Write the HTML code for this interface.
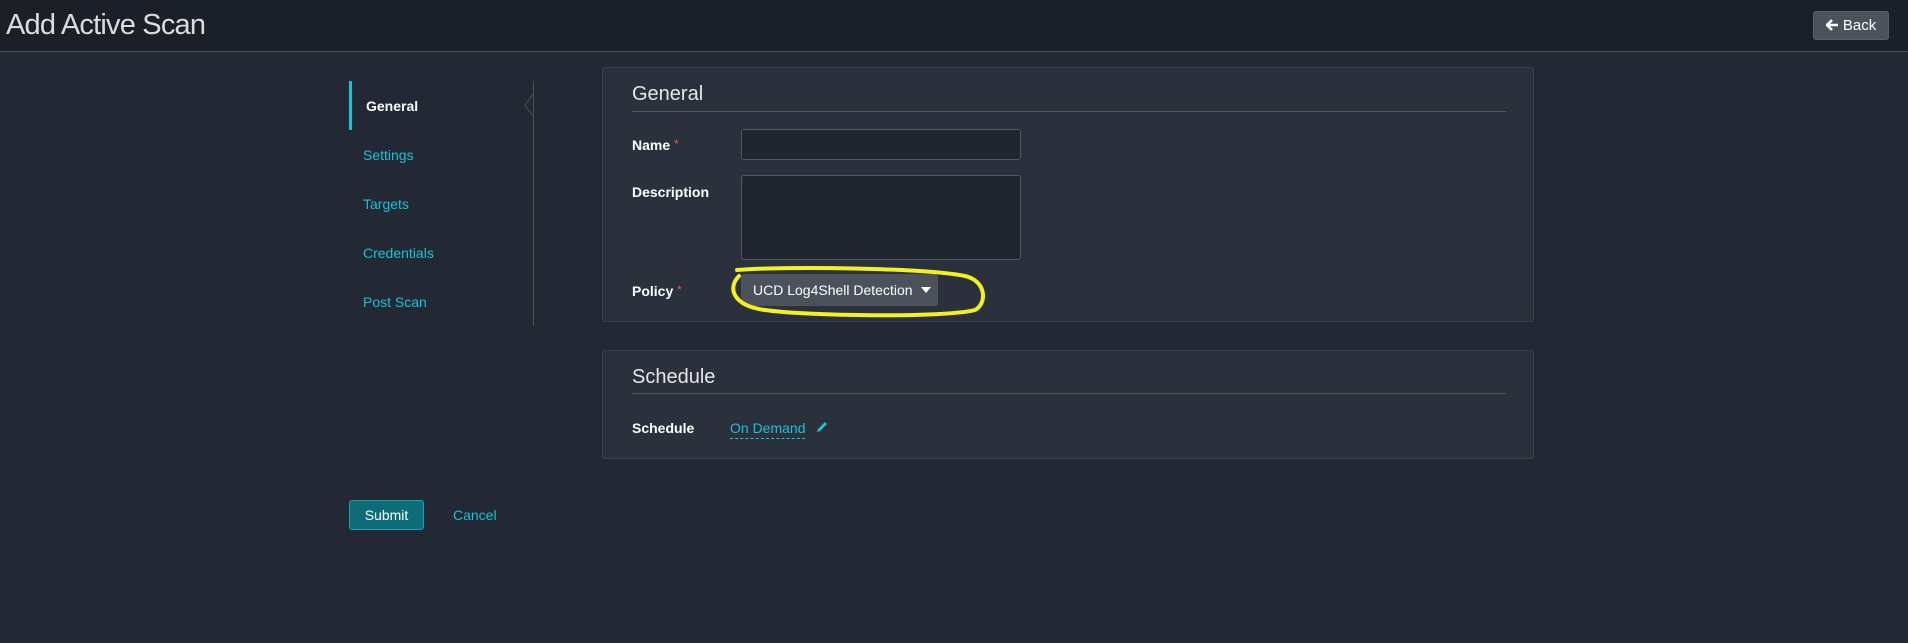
<!DOCTYPE html>
<html><head><meta charset="utf-8"><style>
*{box-sizing:border-box;margin:0;padding:0}
body{width:1908px;height:643px;background:#222834;font-family:"Liberation Sans",sans-serif;position:relative;overflow:hidden;color:#fff}
.a{position:absolute;white-space:nowrap}
.hdr{left:0;top:0;width:1908px;height:52px;background:#1b1f27;border-bottom:1px solid #4a505a}
.title{left:6px;top:9px;font-size:29px;font-weight:300;color:#dcdcdc;letter-spacing:-0.8px}
.back{left:1813px;top:11px;width:76px;height:29px;background:#4c525c;border:1px solid #5a606a;border-radius:3px;font-size:15px;color:#fff;line-height:27px;text-align:center}
.nav{font-size:14px;color:#17c3d6}
.panel{background:#2b313c;border:1px solid #3a404b;border-radius:3px}
.ptitle{font-size:20px;font-weight:300;color:#e6e6e6}
.hr{height:1px;background:#50565f}
.lbl{font-size:14px;font-weight:bold;color:#fff}
.req{color:#e05555;font-weight:normal;font-size:12px;vertical-align:top}
.inp{background:#20252f;border:1px solid #4e5868;border-radius:3px}
</style></head><body>
<div class="a hdr"></div>
<div class="a title">Add Active Scan</div>
<div class="a back"><svg width="13" height="12" viewBox="0 0 13 12" style="vertical-align:-1px"><path d="M6 1 1 6l5 5M1 6h11" stroke="#fff" stroke-width="2.6" fill="none"/></svg> Back</div>

<div class="a" style="left:349px;top:81px;width:3px;height:49px;background:#17c3d6"></div>
<div class="a" style="left:533px;top:81px;width:1px;height:245px;background:#4a505a"></div>
<svg class="a" style="left:524px;top:94px" width="10" height="22"><path d="M9 0 1 11l8 11" stroke="#4a505a" fill="#222834"/></svg>
<div class="a lbl" style="left:366px;top:98px">General</div>
<div class="a nav" style="left:363px;top:147px">Settings</div>
<div class="a nav" style="left:363px;top:196px">Targets</div>
<div class="a nav" style="left:363px;top:245px">Credentials</div>
<div class="a nav" style="left:363px;top:294px">Post Scan</div>

<div class="a panel" style="left:602px;top:67px;width:932px;height:255px"></div>
<div class="a ptitle" style="left:632px;top:83px">General</div>
<div class="a hr" style="left:632px;top:111px;width:874px"></div>
<div class="a lbl" style="left:632px;top:137px">Name <span class="req">*</span></div>
<div class="a inp" style="left:741px;top:129px;width:280px;height:31px"></div>
<div class="a lbl" style="left:632px;top:184px">Description</div>
<div class="a inp" style="left:741px;top:175px;width:280px;height:85px"></div>
<div class="a lbl" style="left:632px;top:283px">Policy <span class="req">*</span></div>
<div class="a" style="left:741px;top:274px;width:197px;height:32px;background:#4c525c;border-radius:3px;font-size:14px;line-height:32px;padding-left:12px;color:#fff">UCD Log4Shell Detection<svg width="10" height="6" style="position:absolute;left:180px;top:13px"><path d="M0 0h10L5 6z" fill="#fff"/></svg></div>
<svg class="a" style="left:725px;top:264px" width="265" height="56"><path d="M12 6C60 2 200 4 240 12 262 17 262 40 250 46 220 54 80 52 40 46 8 42 2 24 14 12" stroke="#f5f01e" stroke-width="4" fill="none" stroke-linecap="round"/></svg>

<div class="a panel" style="left:602px;top:350px;width:932px;height:109px"></div>
<div class="a ptitle" style="left:632px;top:366px">Schedule</div>
<div class="a hr" style="left:632px;top:393px;width:874px"></div>
<div class="a lbl" style="left:632px;top:420px">Schedule</div>
<div class="a" style="left:730px;top:420px;font-size:14px;color:#17c3d6;border-bottom:1px dashed #17c3d6;padding-bottom:2px">On Demand</div>
<svg class="a" style="left:815px;top:421px" width="13" height="13"><path d="M2 11l1-3 7-7 2 2-7 7z" fill="#17c3d6"/></svg>

<div class="a" style="left:349px;top:500px;width:75px;height:30px;background:#0e6b78;border:1px solid #17a2b3;border-radius:3px;font-size:14px;line-height:28px;text-align:center">Submit</div>
<div class="a nav" style="left:453px;top:507px">Cancel</div>
</body></html>
